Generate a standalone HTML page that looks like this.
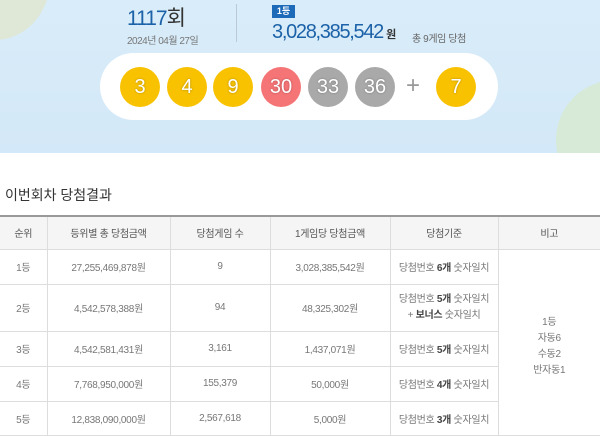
<!DOCTYPE html>
<html><head><meta charset="utf-8"><style>
*{margin:0;padding:0;box-sizing:border-box}
body{width:600px;height:434px;overflow:hidden;background:#fff;font-family:"Liberation Sans","Noto Sans CJK KR",sans-serif;position:relative}
.top{position:absolute;left:0;top:0;width:600px;height:153px;background:linear-gradient(#d9ecf9,#d3e8f8);overflow:hidden}
.c1{position:absolute;left:-60px;top:-80px;width:110px;height:120px;border-radius:50%;background:#dfe8d6}
.c2{position:absolute;left:556px;top:80px;width:120px;height:120px;border-radius:50%;background:#d7ead7}
.a{position:absolute;white-space:nowrap}
.pill{position:absolute;left:100px;top:53px;width:398px;height:67px;border-radius:34px;background:#fff}
.b{position:absolute;top:67px;width:40px;height:40px;border-radius:50%;color:#fff;font-size:20px;line-height:40px;text-align:center;text-shadow:0 0 2px rgba(0,0,0,.3)}
.y{background:#f8c200}.r{background:#f57476}.g{background:#a9a9a9}
table{position:absolute;left:0;top:215px;width:600px;border-collapse:collapse;border-top:2px solid #999;font-size:10px;color:#777;text-align:center;letter-spacing:-.3px}
td,th{border:1px solid #ddd;font-weight:normal}
th{background:#f5f5f5;height:33px;color:#555}
tr td:first-child,tr th:first-child{border-left:none}
tr td:last-child,tr th:last-child{border-right:none}
b{color:#444}
</style></head><body>
<div class="top"><div class="c1"></div><div class="c2"></div>
<div class="a" style="left:127px;top:2px;font-size:21px;color:#1c62a8;letter-spacing:-1px">1117<span style="color:#333">회</span></div>
<div class="a" style="left:127px;top:32px;font-size:10px;color:#777;letter-spacing:-.5px">2024년 04월 27일</div>
<div class="a" style="left:236px;top:4px;width:1px;height:38px;background:#b9c9d6"></div>
<div class="a" style="left:272px;top:5px;width:23px;height:13px;background:#1c6ab8;color:#fff;font-size:9px;line-height:13px;text-align:center;font-weight:bold">1등</div>
<div class="a" style="left:272px;top:21px;font-size:20px;color:#1c62a8;letter-spacing:-1.3px">3,028,385,542<span style="font-size:11px;color:#333;font-weight:bold;letter-spacing:0"> 원</span></div>
<div class="a" style="left:412px;top:30px;font-size:10px;color:#666;letter-spacing:-.4px">총 9게임 당첨</div>
<div class="pill"></div>
<div class="b y" style="left:120px">3</div>
<div class="b y" style="left:167px">4</div>
<div class="b y" style="left:213px">9</div>
<div class="b r" style="left:261px">30</div>
<div class="b g" style="left:308px">33</div>
<div class="b g" style="left:355px">36</div>
<div class="a" style="left:406px;top:72px;font-size:24px;color:#999">+</div>
<div class="b y" style="left:436px">7</div>
</div>
<div class="a" style="left:5px;top:185px;font-size:14px;color:#333">이번회차 당첨결과</div>
<table>
<tr><th style="width:47px">순위</th><th style="width:123px">등위별 총 당첨금액</th><th style="width:100px">당첨게임 수</th><th style="width:120px">1게임당 당첨금액</th><th style="width:108px">당첨기준</th><th>비고</th></tr>
<tr style="height:35px"><td>1등</td><td>27,255,469,878원</td><td>9</td><td>3,028,385,542원</td><td>당첨번호 <b>6개</b> 숫자일치</td><td rowspan="5" style="line-height:16px;padding-top:10px">1등<br>자동6<br>수동2<br>반자동1</td></tr>
<tr style="height:47px"><td>2등</td><td>4,542,578,388원</td><td>94</td><td>48,325,302원</td><td style="line-height:16px">당첨번호 <b>5개</b> 숫자일치<br>+ <b>보너스</b> 숫자일치</td></tr>
<tr style="height:35px"><td>3등</td><td>4,542,581,431원</td><td>3,161</td><td>1,437,071원</td><td>당첨번호 <b>5개</b> 숫자일치</td></tr>
<tr style="height:35px"><td>4등</td><td>7,768,950,000원</td><td>155,379</td><td>50,000원</td><td>당첨번호 <b>4개</b> 숫자일치</td></tr>
<tr style="height:34px"><td>5등</td><td>12,838,090,000원</td><td>2,567,618</td><td>5,000원</td><td>당첨번호 <b>3개</b> 숫자일치</td></tr>
</table>
</body></html>
